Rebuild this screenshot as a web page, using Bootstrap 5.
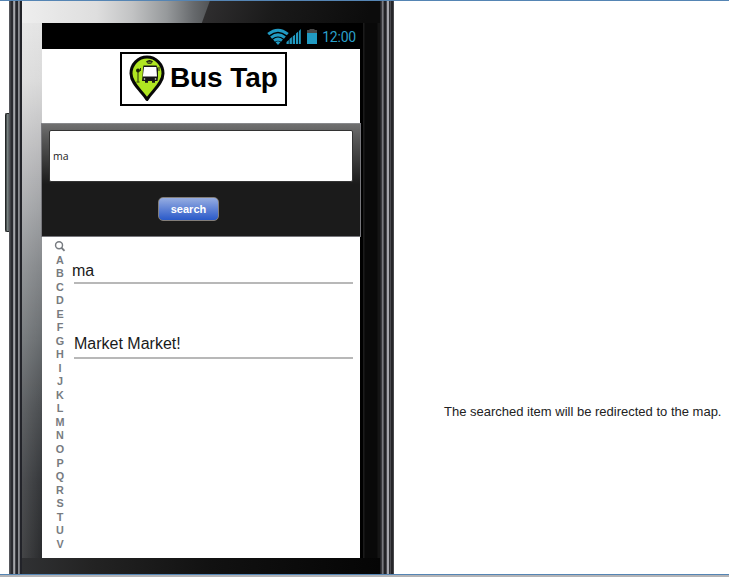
<!DOCTYPE html>
<html lang="en">
<head>
<meta charset="utf-8">
<meta name="viewport" content="width=device-width, initial-scale=1">
<title>Bus Tap</title>
<link href="https://cdn.jsdelivr.net/npm/bootstrap@5.3.0/dist/css/bootstrap.min.css" rel="stylesheet">
<style>
body{font-family:"Liberation Sans",Arial,sans-serif;color:#111;background:#fff}
.stage{height:577px;width:729px;border-top:1px solid #5585b4;border-bottom:2px solid #b4b4b6;box-shadow:inset 0 -1px #5585b4}
.side-key{width:4px;height:119px;margin:112px 0 0 5px;background:linear-gradient(90deg,#333a3a,#788080 50%,#566060);border:solid #242828;border-width:1px 0 1px 1px;border-radius:2px 0 0 2px}
.phone{width:385px;height:573px}
.edge-l{width:13px;background:linear-gradient(90deg,#55565b 0 1px,#3f4045 1px 2px,#2a2b30 2px 4px,#8f9095 4px 5px,#a5a6aa 5px 6px,#45464b 6px 7px,#25262b 7px 9px,#8b8c91 9px 10px,#77787d 10px 11px,#222329 11px 13px)}
.edge-r{width:14px;background:linear-gradient(90deg,#222226 0 1px,#39393e 1px 2px,#77777d 2px 3px,#55555b 3px 4px,#222226 4px 6px,#47474d 6px 7px,#a5a5ac 7px 9px,#303035 9px 10px,#4b4b50 10px 11px,#26262a 11px 13px,#47474b 13px)}
.face{width:358px;padding:22px 20px 0 20px;background:
 linear-gradient(110deg,transparent 0 176px,#2e2d2e 177px,#1a1a1a 240px,#0c0c0c 330px) 0 0/100% 22px no-repeat,
 linear-gradient(90deg,#eee 0,#dedede 75px,#c2c3c4 110px,#96999b 145px,#66696c 172px,#4c4e50 192px) 0 0/100% 22px no-repeat,
 linear-gradient(90deg,#303133 0,#232323 70px,#111 190px,#050505 100%) 0 100%/100% 16px no-repeat,
 linear-gradient(90deg,rgba(255,255,255,.12),transparent 20px) 0 0/20px 100% no-repeat,
 linear-gradient(180deg,#e8e8e8 0,#dadada 80px,#b8b8ba 155px,#9fa1a4 210px,#85888b 265px,#686c6f 340px,#4a4d50 410px,#35373a 480px,#28292b 573px) 0 0/20px 100% no-repeat,
 linear-gradient(90deg,#000 0 3px,#1b1b1b 3px 4px,#090909 5px 17px,#151515 18px) 100% 0/20px 100% no-repeat,#080808}
.screen{width:318px;height:535px;background:#fff}
.status{height:26px;background:#000;padding:2px 4px 0 0;color:#2a9fc8;font:14px/24px Roboto,sans-serif}
.clock{letter-spacing:-.2px}
.brand{height:74px;padding:3px 0 0 5px}
.logo-box{width:167px;height:54px;border:2px solid #000;font-size:28px;font-weight:700;color:#000;line-height:48px}
.logo-box span{letter-spacing:-.1px}
.search-panel{width:320px;height:114px;margin-left:-1px;padding:6px 7px 0;border:1px solid #77777c;border-top:1px solid #88898c;background:linear-gradient(#707070,#5b5b5b 12px,#1b1b1b 60px)}
.query{width:304px;height:52px;border:1px solid #333;border-radius:2px;background:#fff;color:#222;padding:0 3px;font:10.5px/50px "Open Sans",sans-serif}
.go{width:61px;height:24px;margin:15px 0 0 109px;padding:0;border:1px solid #837e79;border-radius:5px;background:linear-gradient(#96ade1,#5a7ed4 55%,#2a5ac9);color:#fff;font-size:11px;font-weight:700;line-height:21px}
.index{width:32px;padding-top:3px;padding-left:4px;color:#777b80;font-size:10.8px;font-weight:700}
.index span,.index svg{display:block;height:13.54px;line-height:13.54px}
.results{width:279px;font-size:16px;color:#1a1a1a}
.hit{border-bottom:2px solid #b8b8b8}
.hit-a{height:47px;padding-top:24px;line-height:20px;text-indent:-2px}
.hit-b{height:75px;padding-top:50px;line-height:20px}
.note{margin:401px 0 0 50px;font-size:13px;line-height:20px;color:#222;white-space:nowrap}
</style>
</head>
<body>
<main class="stage d-flex overflow-hidden">
 <div class="side-key flex-shrink-0"></div>
 <section class="phone d-flex flex-shrink-0">
  <div class="edge-l"></div>
  <div class="face">
   <div class="screen">
    <div class="status d-flex justify-content-end align-items-center">
     <svg width="55" height="18" viewBox="0 0 55 18">
      <g fill="none" stroke="#219ac2" stroke-width="3"><path d="M1.200 6.200Q11 -1.600 20.800 6.200M4.100 9.600Q11 4.100 17.900 9.600M7 12.700Q11 9.500 15 12.700"/></g>
      <path fill="#219ac2" d="M8.600 14.300Q11 12.400 13.400 14.300L11 17ZM19.500 16v-2l2.300-2v4zm3 0v-5l2.400-2V16zm3.200 0V8.500l2.400-2V16zm3.300 0V5.500l2.200-2V16zm3 0V3l1.800-2V16zM40 5h10v11H40z"/>
      <path fill="#484848" d="M40 2h2.500V1h5v1H50v3H40z"/>
     </svg>
     <span class="clock">12:00</span>
    </div>
    <div class="brand d-flex justify-content-center">
     <div class="logo-box d-flex">
      <svg class="flex-shrink-0" width="48" height="50" viewBox="0 0 48 50">
       <path fill="#b0e621" stroke="#080808" stroke-width="3" stroke-linejoin="round" d="M25 45.500C21 38 9 30 9 19.500a16 16.500 0 0 1 32 0C41 30 29 38 25 45.500Z"/>
       <path fill="#151515" d="M24 7.500q3.500-3 7 0l-1.800 2.300h-3.400zM21.500 11.500h13l1.500 3v8.500l-.5 4h-2.500v1.700h-3v-1.700h-4v1.700h-3v-1.700h-3l.5-5 .5-8z"/>
       <path fill="#fff" d="M22 13h12.300l.7 9.500H20.800z"/>
       <path fill="#b0e621" d="M25.500 7.800h4v.7h-4z"/>
       <g stroke="#26310b" fill="none"><path d="M16 16v11.500M14.500 28h3M18.500 14v3M37 13v4"/></g>
       <circle cx="16" cy="16.500" r="2" fill="#1b2108"/>
       <g fill="#e8eddc"><circle cx="22.500" cy="25" r=".8"/><circle cx="33.500" cy="25" r=".8"/></g>
      </svg>
      <span class="text-nowrap">Bus Tap</span>
     </div>
    </div>
    <div class="search-panel">
     <div class="query">ma</div>
     <button class="go d-block" type="button">search</button>
    </div>
    <div class="d-flex">
     <div class="index text-center flex-shrink-0">
      <svg class="mx-auto" width="12" height="14" viewBox="0 0 12 14" fill="none" stroke="#777b80" stroke-width="1.500"><circle cx="5" cy="5.500" r="3.600"/><path d="m7.500 8 3.200 3.200" stroke-width="1.900"/></svg>
      <span>A</span><span>B</span><span>C</span><span>D</span><span>E</span><span>F</span><span>G</span><span>H</span><span>I</span><span>J</span><span>K</span><span>L</span><span>M</span><span>N</span><span>O</span><span>P</span><span>Q</span><span>R</span><span>S</span><span>T</span><span>U</span><span>V</span>
     </div>
     <div class="results flex-shrink-0">
      <div class="hit hit-a">ma</div>
      <div class="hit hit-b">Market Market!</div>
     </div>
    </div>
   </div>
  </div>
  <div class="edge-r"></div>
 </section>
 <p class="note">The searched item will be redirected to the map.</p>
</main>
<script src="https://cdn.jsdelivr.net/npm/bootstrap@5.3.0/dist/js/bootstrap.bundle.min.js"></script>
</body>
</html>
